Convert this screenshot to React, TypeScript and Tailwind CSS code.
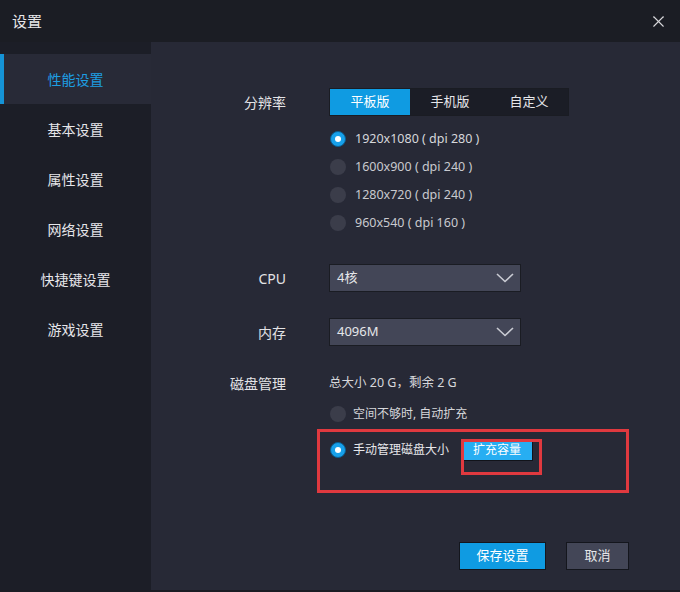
import { X } from "lucide-react";

const navItems = ["性能设置", "基本设置", "属性设置", "网络设置", "快捷键设置", "游戏设置"];

const resolutions = [
  "1920x1080 ( dpi 280 )",
  "1600x900 ( dpi 240 )",
  "1280x720 ( dpi 240 )",
  "960x540 ( dpi 160 )",
];

function Radio({ checked }: { checked?: boolean }) {
  return checked ? (
    <span className="flex h-[16px] w-[16px] shrink-0 items-center justify-center rounded-full border border-[#0a5f93] bg-[#17a0ea]">
      <span className="h-[6px] w-[6px] rounded-full bg-white" />
    </span>
  ) : (
    <span className="h-[16px] w-[16px] shrink-0 rounded-full bg-[#3b3d4a]" />
  );
}

function Chevron() {
  return (
    <svg width="18" height="10" viewBox="0 0 18 10" fill="none" className="text-[#c9cbd3]">
      <polyline points="1,1 9,8.5 17,1" stroke="currentColor" strokeWidth="1.6" />
    </svg>
  );
}

function Select({ value }: { value: string }) {
  return (
    <div className="flex h-[28px] w-[192px] items-center justify-between border border-[#1a1c23] bg-[#434657] pl-[7px] pr-[6px] text-[13px] text-[#e6e6ea]">
      <span>{value}</span>
      <Chevron />
    </div>
  );
}

export default function App() {
  return (
    <div className="flex h-[592px] w-[680px] flex-col bg-[#1b1d24] font-['Noto_Sans','Noto_Sans_CJK_SC',sans-serif] text-[#e3e3e6]">
      {/* title bar */}
      <div className="flex h-[42px] shrink-0 items-center justify-between pl-[12px] pr-[12px]">
        <span className="text-[15px] text-[#e8e8ea]">设置</span>
        <X className="h-[19px] w-[19px] text-[#d8d8dc]" strokeWidth={1.4} />
      </div>

      <div className="flex min-h-0 flex-1 pb-[2px]">
        {/* sidebar */}
        <div className="flex w-[151px] shrink-0 flex-col bg-[#1c1e27] pt-[12px]">
          {navItems.map((item, i) => (
            <div
              key={item}
              className={
                i === 0
                  ? "flex h-[50px] items-center justify-center border-l-[4px] border-[#1593d6] bg-[#282a37] pr-[4px] text-[14px] text-[#1d9ee2]"
                  : "flex h-[50px] items-center justify-center text-[14px] text-[#e6e6ea]"
              }
            >
              {item}
            </div>
          ))}
        </div>

        {/* main */}
        <div className="flex flex-1 flex-col bg-[#272936] pt-[46px]">
          {/* resolution */}
          <div className="flex">
            <div className="flex h-[28px] w-[135px] shrink-0 items-center justify-end text-[14px]">分辨率</div>
            <div className="ml-[43px] flex flex-col">
              <div className="flex h-[28px] w-[240px] border border-[#1a1c23] bg-[#1b1d26] text-[13px]">
                <div className="flex w-[80px] items-center justify-center bg-[#0f9be2] text-white">平板版</div>
                <div className="flex w-[80px] items-center justify-center text-[#e6e6ea]">手机版</div>
                <div className="flex flex-1 items-center justify-center text-[#e6e6ea]">自定义</div>
              </div>
              <div className="mt-[9px] flex flex-col">
                {resolutions.map((r, i) => (
                  <div key={r} className="flex h-[28px] items-center gap-[9px] pl-[1px] text-[12.5px] text-[#c9cacf]">
                    <Radio checked={i === 0} />
                    <span className={i === 0 ? "text-[#d6d7db]" : ""}>{r}</span>
                  </div>
                ))}
              </div>
            </div>
          </div>

          {/* cpu */}
          <div className="mt-[27px] flex items-center">
            <div className="w-[135px] shrink-0 text-right text-[14px]">CPU</div>
            <div className="ml-[43px]">
              <Select value="4核" />
            </div>
          </div>

          {/* memory */}
          <div className="mt-[26px] flex items-center">
            <div className="w-[135px] shrink-0 text-right text-[14px]">内存</div>
            <div className="ml-[43px]">
              <Select value="4096M" />
            </div>
          </div>

          {/* disk */}
          <div className="mt-[27px] flex">
            <div className="flex h-[20px] w-[135px] shrink-0 items-center justify-end text-[14px]">磁盘管理</div>
            <div className="ml-[43px] flex flex-col">
              <div className="flex h-[20px] items-center text-[12.5px] text-[#d6d7db]">总大小 20 G，剩余 2 G</div>
              <div className="mt-[7px] flex h-[28px] items-center gap-[7px] pl-[1px] text-[12px] text-[#d6d7db]">
                <Radio />
                <span>空间不够时, 自动扩充</span>
              </div>
            </div>
          </div>

          <div className="ml-[166px] mt-[1px] h-[64px] w-[312px] border-[3px] border-[#e0393f] pl-[10px] pt-[8px]">
            <div className="flex h-[20px] items-center text-[12px] text-[#e6e6ea]">
              <Radio checked />
              <span className="ml-[7px]">手动管理磁盘大小</span>
              <div className="relative ml-[13px]">
                <div className="flex h-[19px] w-[70px] items-center justify-center bg-[#27aef2] text-[12px] text-white shadow-[1px_1px_0_#11131a]">
                  扩充容量
                </div>
                <div className="absolute left-[-1px] top-[-2px] h-[36px] w-[81px] border-[3px] border-[#e0393f]" />
              </div>
            </div>
          </div>

          {/* footer buttons */}
          <div className="mt-auto flex justify-end gap-[20px] pb-[20px] pr-[51px] text-[13px]">
            <div className="flex h-[28px] w-[87px] items-center justify-center border border-[#14161d] bg-[#0f9be2] text-white">
              保存设置
            </div>
            <div className="flex h-[28px] w-[63px] items-center justify-center border border-[#14161d] bg-[#434657] text-[#e6e6ea]">
              取消
            </div>
          </div>
        </div>
      </div>
    </div>
  );
}
